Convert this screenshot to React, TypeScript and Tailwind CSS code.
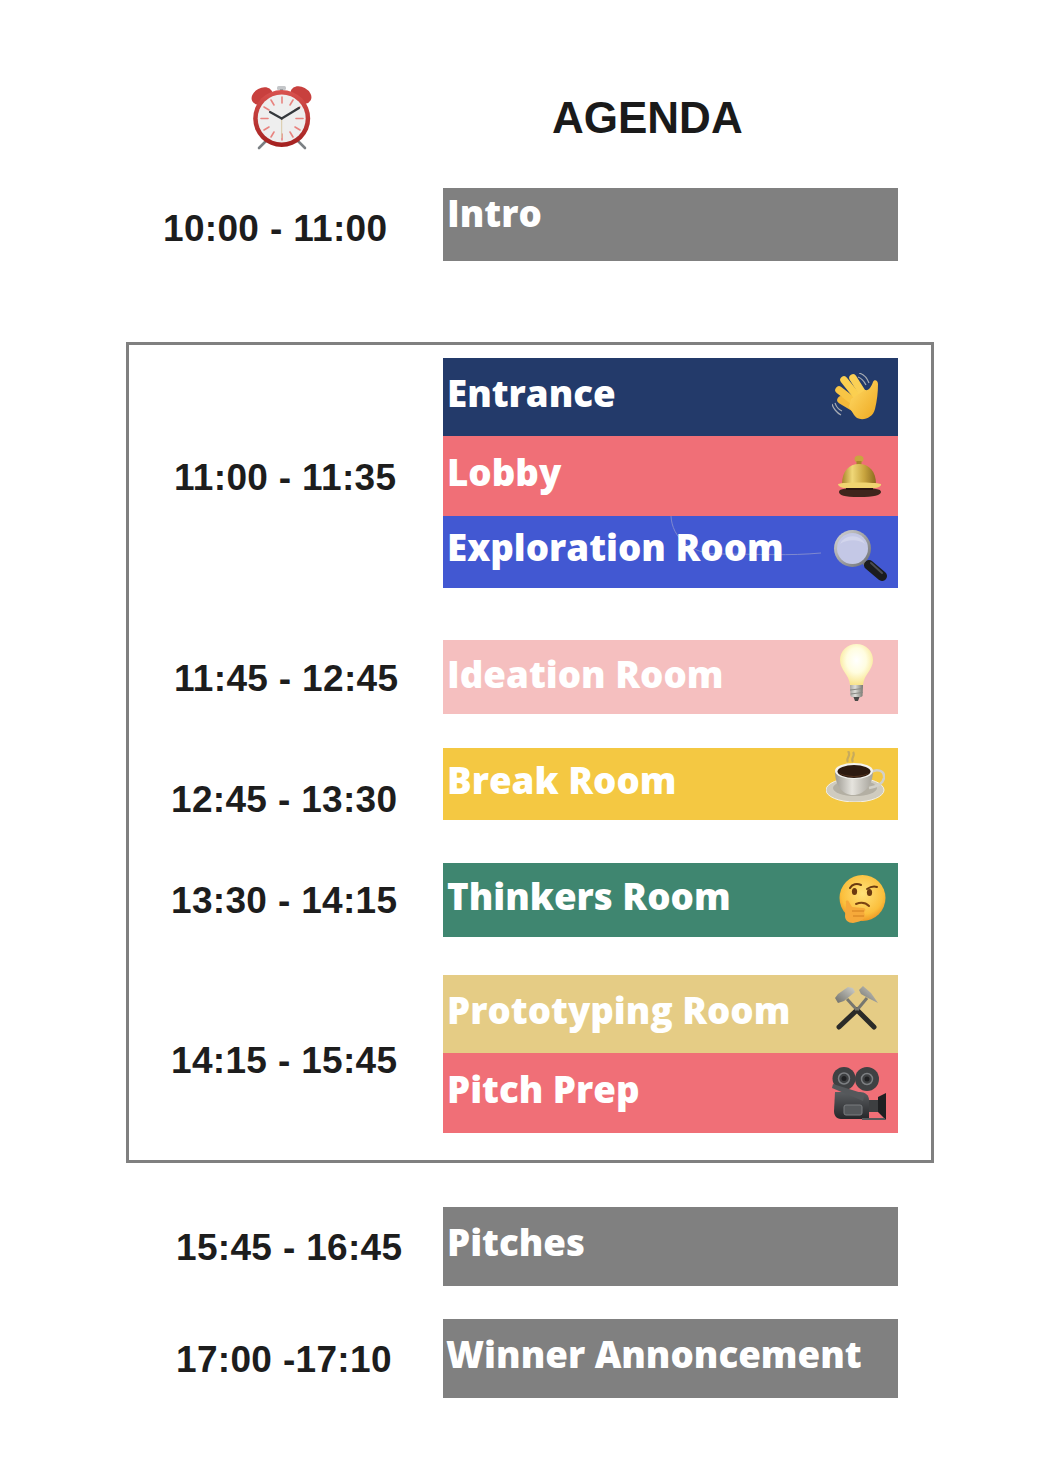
import React from "react";

const ClockIcon = () => (
  <svg width="64" height="66" viewBox="0 0 64 66">
    <defs>
      <linearGradient id="clockRed" x1="0" y1="0" x2="0" y2="1">
        <stop offset="0" stopColor="#d9524f" />
        <stop offset="1" stopColor="#a3201f" />
      </linearGradient>
    </defs>
    <path d="M16 56 L9 63" stroke="#7b8084" strokeWidth="2.6" strokeLinecap="round" />
    <path d="M48 56 L55 63" stroke="#7b8084" strokeWidth="2.6" strokeLinecap="round" />
    <rect x="27" y="1" width="9" height="4" rx="1.5" fill="#c4c6c9" />
    <rect x="30" y="4" width="3" height="3" fill="#9a9da0" />
    <ellipse cx="12" cy="11" rx="11" ry="8" transform="rotate(-28 12 11)" fill="#c8403e" />
    <ellipse cx="51" cy="10" rx="11" ry="8" transform="rotate(28 51 10)" fill="#c8403e" />
    <circle cx="31.7" cy="33.5" r="28.5" fill="url(#clockRed)" />
    <circle cx="31.7" cy="33.5" r="24" fill="#eeeeee" />
    <g stroke="#e8837f" strokeWidth="1.6" strokeLinecap="round">
      <path d="M32 12 V18" />
      <path d="M32 49 V55" />
      <path d="M11 33.5 H18" />
      <path d="M46 33.5 H53" />
      <path d="M21 15 L24 20" />
      <path d="M43 15 L40 20" />
      <path d="M14 22 L19 25" />
      <path d="M50 22 L45 25" />
      <path d="M14 45 L19 42" />
      <path d="M50 45 L45 42" />
      <path d="M21 52 L24 47" />
      <path d="M43 52 L40 47" />
    </g>
    <path d="M31.7 33.5 V53" stroke="#d9c9a5" strokeWidth="1" />
    <path d="M31.7 33.5 L20 27" stroke="#34383c" strokeWidth="2.2" strokeLinecap="round" />
    <path d="M31.7 33.5 L49 23" stroke="#34383c" strokeWidth="2.2" strokeLinecap="round" />
  </svg>
);

const WaveIcon = () => (
  <svg width="48" height="48" viewBox="0 0 48 48">
    <defs>
      <linearGradient id="waveSkin" x1="0" y1="0" x2="1" y2="1">
        <stop offset="0" stopColor="#ffdc6a" />
        <stop offset="1" stopColor="#eea820" />
      </linearGradient>
    </defs>
    <path d="M0 31 C1 35 5 40 9 42" stroke="#a6abb3" strokeWidth="1.2" fill="none" />
    <path d="M3 30 C4 33 7 37 10 38" stroke="#a6abb3" strokeWidth="1.2" fill="none" />
    <path d="M27 0 C31 1 35 5 37 10" stroke="#a6abb3" strokeWidth="1.2" fill="none" />
    <path d="M26 4 C29 5 32 8 34 12" stroke="#a6abb3" strokeWidth="1.2" fill="none" />
    <g strokeWidth="7.5" strokeLinecap="round" fill="none">
      <path d="M9 27 L24 36" stroke="#f4b93a" />
      <path d="M7 17 L25 31" stroke="#f8c545" />
      <path d="M12 7 L28 27" stroke="#fbcf50" />
      <path d="M21 5 L33 24" stroke="#fbd055" />
    </g>
    <path d="M19 26 L33 17 C37 18 39 14 41 9 C42 6 46 7 46 11 C46 19 45 28 43 36 C41 45 31 48 25 45 C22 43 20 38 17 34 Z" fill="url(#waveSkin)" />
  </svg>
);

const BellIcon = () => (
  <svg width="44" height="42" viewBox="0 0 44 42">
    <defs>
      <linearGradient id="bellGold" x1="0" y1="0" x2="1" y2="0">
        <stop offset="0" stopColor="#a8842a" />
        <stop offset="0.3" stopColor="#f0d878" />
        <stop offset="0.65" stopColor="#c9a53f" />
        <stop offset="1" stopColor="#8c6a1e" />
      </linearGradient>
    </defs>
    <ellipse cx="21" cy="4" rx="4.5" ry="3.5" fill="#c9a53f" />
    <rect x="18.5" y="6" width="5" height="4" fill="#a8842a" />
    <path d="M4 29 C4 16 11 9 21 9 C31 9 38 16 38 29 Z" fill="url(#bellGold)" />
    <path d="M0 29 C6 27 36 27 43 29 C44 32 38 34 21 34 C5 34 0 32 0 29 Z" fill="#f0d470" />
    <path d="M1 37 C1 34 6 33 21 33 C37 33 43 34 43 37 C43 40 36 42 21 42 C6 42 1 40 1 37 Z" fill="#3f251c" />
    <path d="M8 33 H35 V35 H8 Z" fill="#2c1712" />
  </svg>
);

const MagnifierIcon = () => (
  <svg width="54" height="52" viewBox="0 0 54 52">
    <defs>
      <linearGradient id="magRing" x1="0" y1="0" x2="1" y2="1">
        <stop offset="0" stopColor="#d8d8d8" />
        <stop offset="1" stopColor="#6a6c70" />
      </linearGradient>
    </defs>
    <path d="M31 33 L36 38" stroke="#77797d" strokeWidth="5" />
    <path d="M36 36 L49 47" stroke="#1b1c1f" strokeWidth="10" strokeLinecap="round" />
    <path d="M38 34 L49 44" stroke="#4b4d52" strokeWidth="2" strokeLinecap="round" />
    <circle cx="19.5" cy="19.5" r="18.5" fill="url(#magRing)" />
    <circle cx="19.5" cy="19.5" r="15.5" fill="#c4c8e6" />
    <path d="M7 15 A14 14 0 0 1 32 15 C26 10 14 10 7 15 Z" fill="#d2d5ec" />
  </svg>
);

const BulbIcon = () => (
  <svg width="33" height="57" viewBox="0 0 33 57">
    <defs>
      <radialGradient id="bulbGlow" cx="0.5" cy="0.4" r="0.6">
        <stop offset="0" stopColor="#ffffff" />
        <stop offset="0.5" stopColor="#fffde0" />
        <stop offset="1" stopColor="#f8e48c" />
      </radialGradient>
      <linearGradient id="bulbBase" x1="0" y1="0" x2="1" y2="0">
        <stop offset="0" stopColor="#a5a5a0" />
        <stop offset="0.4" stopColor="#ddddd8" />
        <stop offset="1" stopColor="#77776f" />
      </linearGradient>
    </defs>
    <path d="M16.5 0 C7 0 0 7 0 16 C0 26 9 30 10 41 H23 C24 30 33 26 33 16 C33 7 26 0 16.5 0 Z" fill="url(#bulbGlow)" />
    <path d="M10 41 H23 L22.5 52 C21 54 12 54 10.5 52 Z" fill="url(#bulbBase)" />
    <path d="M13.5 53 H19.5 L18 57 H15 Z" fill="#4a4a48" />
    <path d="M10 46 L23 44.5 M10.5 50 L22.8 48.5" stroke="#8a8a84" strokeWidth="1" />
  </svg>
);

const CoffeeIcon = () => (
  <svg width="59" height="51" viewBox="0 0 59 51">
    <defs>
      <linearGradient id="cupBody" x1="0" y1="0" x2="1" y2="0">
        <stop offset="0" stopColor="#9d9a92" />
        <stop offset="0.45" stopColor="#e6e4de" />
        <stop offset="1" stopColor="#a5a29a" />
      </linearGradient>
    </defs>
    <path d="M22 11 C19 7 26 5 22 0 M27 11 C24 7 30 5 27 1" stroke="#a8986e" strokeWidth="2.2" fill="none" opacity="0.6" />
    <ellipse cx="29" cy="39" rx="29" ry="12" fill="#cfcbbf" stroke="#f3f0e6" strokeWidth="1" />
    <ellipse cx="29" cy="37" rx="22" ry="8" fill="#b3afa3" />
    <path d="M44 22 C50 17 59 19 58 27 C57 33 49 36 43 37" stroke="#d2d0c8" strokeWidth="2.5" fill="none" />
    <path d="M9 20 C9 34 16 44 27 44 C38 44 47 34 47 20 Z" fill="url(#cupBody)" />
    <ellipse cx="28" cy="20" rx="19" ry="8" fill="#f4f3ef" />
    <ellipse cx="28" cy="20.5" rx="16.5" ry="6.5" fill="#2d1a10" />
    <path d="M13 22 C20 26 36 26 43 22 C38 27 18 27 13 22 Z" fill="#5d3a22" />
  </svg>
);

const ThinkingIcon = () => (
  <svg width="47" height="48" viewBox="0 0 47 48">
    <defs>
      <radialGradient id="faceSkin" cx="0.5" cy="0.4" r="0.65">
        <stop offset="0" stopColor="#ffe27a" />
        <stop offset="0.7" stopColor="#fbbf3c" />
        <stop offset="1" stopColor="#ea8c1e" />
      </radialGradient>
    </defs>
    <circle cx="23.5" cy="23" r="23" fill="url(#faceSkin)" />
    <path d="M11 13 C13 9 18 8 22 10" stroke="#6b3a10" strokeWidth="2" fill="none" strokeLinecap="round" />
    <path d="M28 14 C31 12 35 11 38 12" stroke="#6b3a10" strokeWidth="2" fill="none" strokeLinecap="round" />
    <ellipse cx="15.5" cy="16.5" rx="2.6" ry="3.6" fill="#6b3a10" />
    <ellipse cx="30.5" cy="17.5" rx="2.6" ry="3.6" fill="#6b3a10" />
    <path d="M17 29 C22 27 27 28 30 31" stroke="#7a4312" strokeWidth="2" fill="none" strokeLinecap="round" />
    <path d="M7 28 C6 25 9 25 10 27 L13 32 L24 33 C27 33 27 36 25 37 L26 41 C25 45 20 47 14 48 C9 48 6 45 6 41 Z" fill="#f6a93a" />
    <path d="M13 36 H25 M14 41 H25" stroke="#d07f1f" strokeWidth="1" />
  </svg>
);

const HammerIcon = () => (
  <svg width="43" height="44" viewBox="0 0 43 44">
    <defs>
      <linearGradient id="hamHead" x1="0" y1="1" x2="1" y2="0">
        <stop offset="0" stopColor="#6e6e68" />
        <stop offset="1" stopColor="#d0d0ca" />
      </linearGradient>
    </defs>
    <path d="M22 24 L39 41" stroke="#2b2b28" strokeWidth="5" strokeLinecap="round" />
    <path d="M22 24 L4 41" stroke="#2b2b28" strokeWidth="5" strokeLinecap="round" />
    <path d="M12 13 L22 24" stroke="#77776f" strokeWidth="3" />
    <path d="M32 12 L22 24" stroke="#77776f" strokeWidth="3" />
    <path d="M0 12 L3 8 L13 1 L18 2 L20 6 L9 15 L3 17 Z" fill="url(#hamHead)" />
    <path d="M24 4 L28 0 L36 7 L43 17 L33 12 L26 8 Z" fill="url(#hamHead)" />
  </svg>
);

const CameraIcon = () => (
  <svg width="54" height="54" viewBox="0 0 54 54">
    <defs>
      <linearGradient id="camBody" x1="0" y1="0" x2="0" y2="1">
        <stop offset="0" stopColor="#5a5d60" />
        <stop offset="1" stopColor="#26272a" />
      </linearGradient>
    </defs>
    <circle cx="12" cy="11.5" r="11.5" fill="#3f4143" />
    <circle cx="35" cy="12" r="12" fill="#3f4143" />
    <circle cx="12" cy="11.5" r="5.5" fill="none" stroke="#7c7f82" strokeWidth="1.5" />
    <circle cx="35" cy="12" r="5.5" fill="none" stroke="#7c7f82" strokeWidth="1.5" />
    <circle cx="12" cy="11.5" r="2.5" fill="#1f2022" />
    <circle cx="35" cy="12" r="2.5" fill="#1f2022" />
    <path d="M3 25 H28 C33 25 37 28 37 33 V52 H9 C4 52 2 48 2 44 Z" fill="url(#camBody)" />
    <path d="M1 17 L33 27 L31 34 L0 21 Z" fill="#55585b" />
    <rect x="12" y="38" width="18" height="10" rx="2" fill="#55585b" stroke="#7a7d80" strokeWidth="1" />
    <rect x="37" y="33" width="10" height="12" fill="#3d3f41" />
    <path d="M46 30 L54 26 V53 L46 45 Z" fill="#1f2022" />
    <path d="M30 52 H53" stroke="#55585b" strokeWidth="2" />
  </svg>
);

type BarProps = {
  label: string;
  barCls: string;
  textCls: string;
  icon?: React.ReactNode;
  iconCls?: string;
  children?: React.ReactNode;
};

const Bar = ({ label, barCls, textCls, icon, iconCls, children }: BarProps) => (
  <div className={"flex items-start justify-between w-[455px] " + barCls}>
    {children}
    <span className={"relative font-['Open_Sans',sans-serif] font-extrabold text-white text-[36.7px] leading-none whitespace-nowrap " + textCls}>
      {label}
    </span>
    {icon && <div className={"shrink-0 " + iconCls}>{icon}</div>}
  </div>
);

const Time = ({ children, cls }: { children: string; cls: string }) => (
  <div className={"flex items-center font-['Liberation_Sans',Arial,sans-serif] font-bold text-[37px] tracking-[0.33px] leading-none text-[#1d1d1d] whitespace-nowrap " + cls}>
    {children}
  </div>
);

export default function App() {
  return (
    <div className="w-[1040px] h-[1468px] bg-white pt-[85px]">
      <div className="flex items-start h-[103px]">
        <div className="ml-[250px]">
          <ClockIcon />
        </div>
        <h1 className="ml-[238px] mt-[8px] font-['Liberation_Sans',Arial,sans-serif] font-bold text-[44px] leading-[50px] text-[#1a1a1a]">
          AGENDA
        </h1>
      </div>

      <div className="flex">
        <Time cls="w-[443px] pl-[163px] pt-[8px]">10:00 - 11:00</Time>
        <Bar label="Intro" barCls="h-[73px] bg-[#808080]" textCls="pl-[4px] pt-[7px]" />
      </div>

      <div className="relative flex flex-col ml-[126px] mt-[81px] w-[808px] h-[821px] border-[3px] border-[#808080] pt-[13px]">
        <div className="flex">
          <Time cls="w-[314px] pl-[45px] pt-[8px]">11:00 - 11:35</Time>
          <div className="flex flex-col">
            <Bar label="Entrance" barCls="h-[78px] bg-[#233A6A]" textCls="pl-[4px] pt-[17px]" icon={<WaveIcon />} iconCls="mt-[15px] mr-[18px]" />
            <Bar label="Lobby" barCls="h-[80px] bg-[#F06F77]" textCls="pl-[4px] pt-[18px]" icon={<BellIcon />} iconCls="mt-[19px] mr-[16px]" />
            <Bar label="Exploration Room" barCls="relative h-[72px] bg-[#4258D2]" textCls="pl-[4px] pt-[13px]" icon={<MagnifierIcon />} iconCls="mt-[13px] mr-[11px]">
              <svg className="absolute left-[226px] top-0" width="152" height="42" viewBox="0 0 152 42">
                <path d="M2 0 C3 22 22 38 50 38 C90 38 120 40 152 37" stroke="#7f89cf" strokeWidth="1" fill="none" />
              </svg>
            </Bar>
          </div>
        </div>
        <div className="flex mt-[52px]">
          <Time cls="w-[314px] pl-[45px] pt-[2px]">11:45 - 12:45</Time>
          <Bar label="Ideation Room" barCls="h-[74px] bg-[#F5BFBF]" textCls="pl-[4px] pt-[16px]" icon={<BulbIcon />} iconCls="mt-[4px] mr-[25px]" />
        </div>
        <div className="flex mt-[34px]">
          <Time cls="w-[314px] pl-[42px] pt-[30px]">12:45 - 13:30</Time>
          <Bar label="Break Room" barCls="h-[72px] bg-[#F4C842]" textCls="pl-[4px] pt-[14px]" icon={<CoffeeIcon />} iconCls="mt-[3px] mr-[13px]" />
        </div>
        <div className="flex mt-[43px]">
          <Time cls="w-[314px] pl-[42px]">13:30 - 14:15</Time>
          <Bar label="Thinkers Room" barCls="h-[74px] bg-[#3F8670]" textCls="pl-[4px] pt-[15px]" icon={<ThinkingIcon />} iconCls="mt-[12px] mr-[12px]" />
        </div>
        <div className="flex mt-[38px]">
          <Time cls="w-[314px] pl-[42px] pt-[12px]">14:15 - 15:45</Time>
          <div className="flex flex-col">
            <Bar label="Prototyping Room" barCls="h-[78px] bg-[#E5CC85]" textCls="pl-[4px] pt-[17px]" icon={<HammerIcon />} iconCls="mt-[11px] mr-[20px]" />
            <Bar label="Pitch Prep" barCls="h-[80px] bg-[#F06F77]" textCls="pl-[4px] pt-[18px]" icon={<CameraIcon />} iconCls="mt-[14px] mr-[12px]" />
          </div>
        </div>
      </div>

      <div className="flex mt-[44px]">
        <Time cls="w-[443px] pl-[176px] pt-[1px]">15:45 - 16:45</Time>
        <Bar label="Pitches" barCls="h-[79px] bg-[#808080]" textCls="pl-[4px] pt-[17px]" />
      </div>
      <div className="flex mt-[33px]">
        <Time cls="w-[443px] pl-[176px] pt-[1px]">17:00 -17:10</Time>
        <Bar label="Winner Annoncement" barCls="h-[79px] bg-[#808080]" textCls="pl-[3px] pt-[17px]" />
      </div>
    </div>
  );
}
